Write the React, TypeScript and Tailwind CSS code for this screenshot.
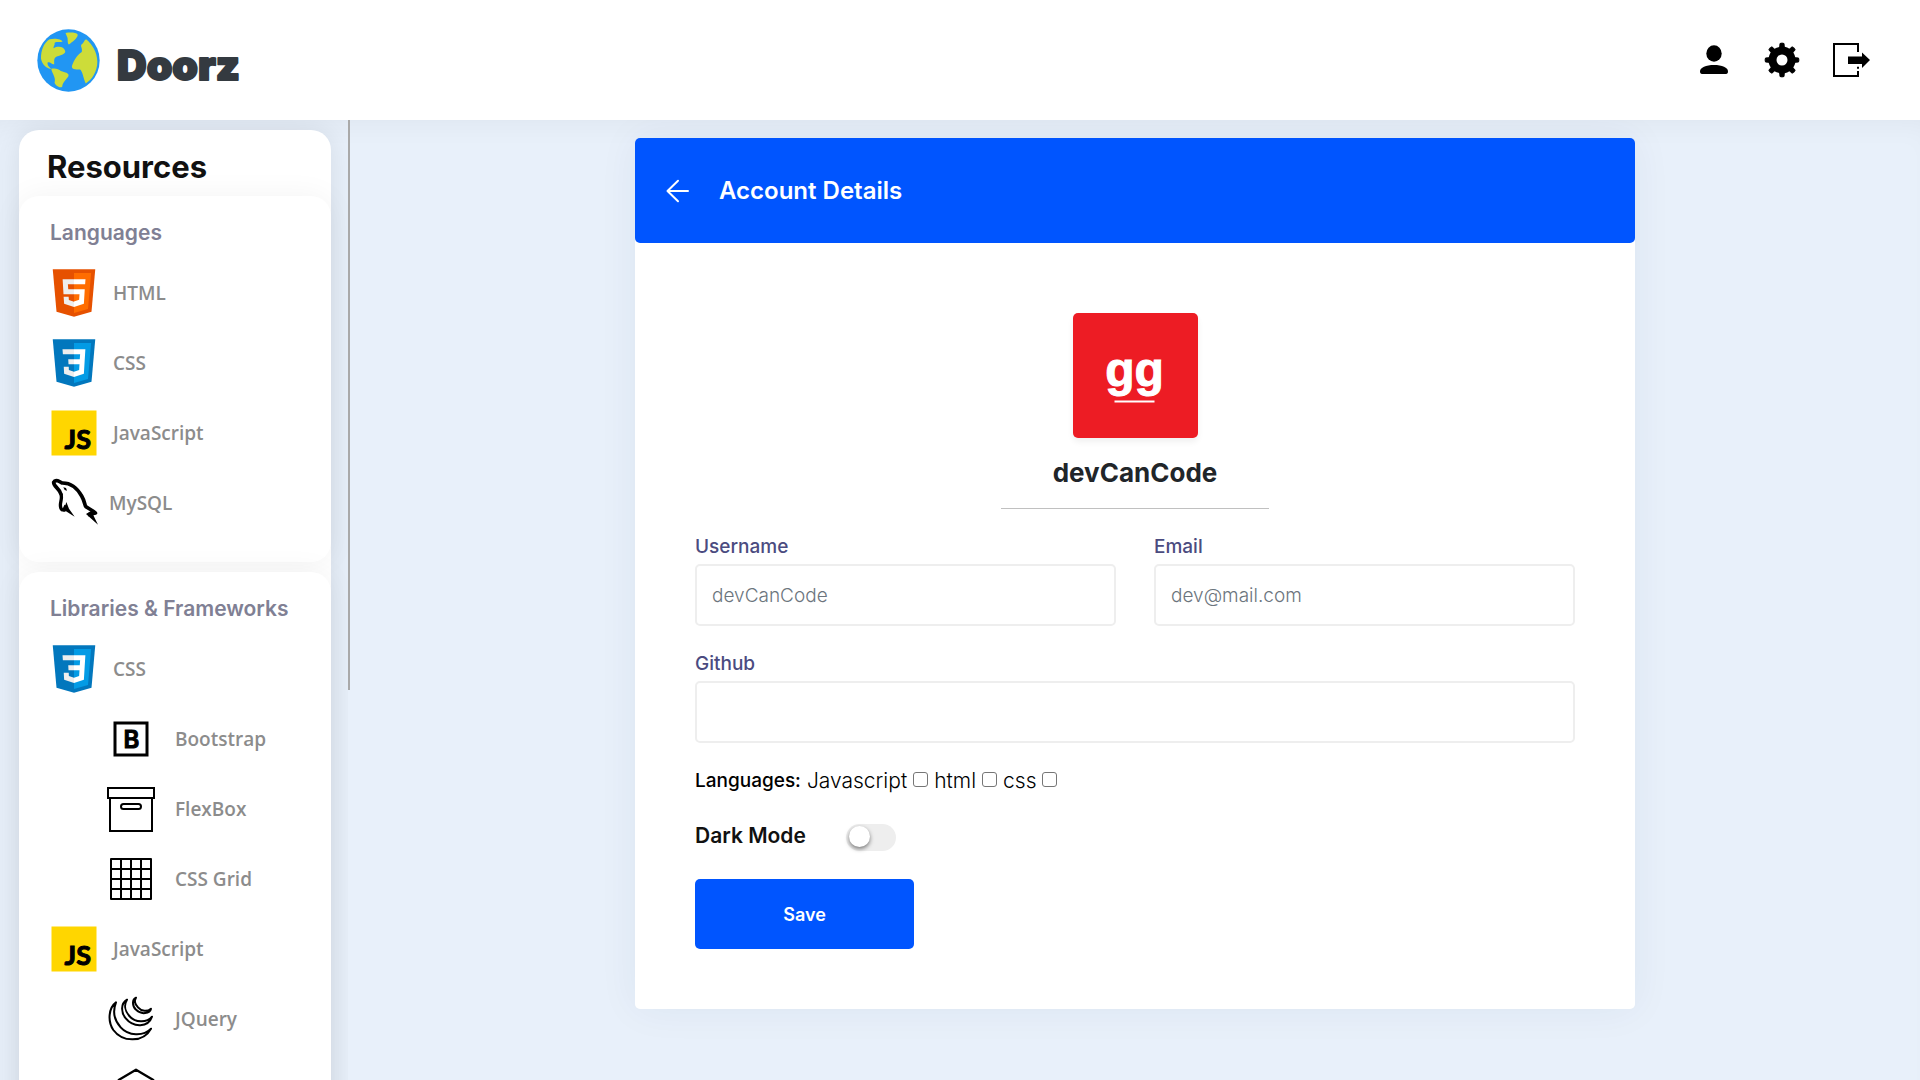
import type { ReactNode } from "react";

function Globe() {
  return (
    <svg viewBox="110 86 190 190" className="size-[63px]" aria-hidden="true">
      <circle cx="205" cy="181" r="94" fill="#2196F3" />
      <g fill="#CDDC39">
        <path d="M122 175C122 150 130 128 148 117C165 113 185 117 187 124C178 128 168 122 163 128C165 134 158 138 160 144C175 135 192 140 195 152C197 162 180 165 172 168C160 172 162 180 162 192C155 195 150 183 142 187C140 197 150 203 153 207C140 205 125 195 122 175z" />
        <path d="M153 206C165 203 175 206 182 213C195 218 207 218 205 228C200 238 188 245 186 260C178 266 165 255 163 248C168 232 155 220 153 206z" />
        <path d="M196 98C210 96 228 96 233 103C232 115 215 125 206 133C200 128 205 115 200 108z" />
        <path d="M258 117C275 130 292 155 292 185C292 215 275 240 257 250C250 235 248 215 240 208C225 208 212 208 216 195C222 180 230 165 245 155C248 145 240 138 244 133C250 130 252 120 258 117z" />
      </g>
    </svg>
  );
}

function Wordmark() {
  return (
    <svg viewBox="0 0 140 70" className="h-[70px] w-[140px]" role="img" aria-label="Doorz">
      <text
        x="1"
        y="55"
        fill="#343a40"
        stroke="#343a40"
        strokeWidth="2"
        strokeLinejoin="round"
        className="font-['Inter',sans-serif] text-[41px] font-black"
      >
        Doorz
      </text>
    </svg>
  );
}

function UserIcon() {
  return (
    <svg viewBox="0 0 50 50" className="size-[50px]" aria-hidden="true">
      <ellipse cx="25" cy="18.500" rx="7.700" ry="8.300" />
      <path d="M11 36.500C11 32.500 17 30 25 30S39 32.500 39 36.500C39 38 38.300 39 37 39H13C11.700 39 11 38 11 36.500z" />
    </svg>
  );
}

function GearIcon() {
  return (
    <svg viewBox="0 0 50 50" className="size-[50px]" aria-hidden="true">
      {[0, 45, 90, 135, 180, 225, 270, 315].map((a) => (
        <path key={a} d="M22.500 15L23 8.500Q25 7.700 27 8.500L27.500 15z" transform={`rotate(${a} 25 25)`} stroke="#000" strokeWidth="1" />
      ))}
      <circle cx="25" cy="25" r="9.500" fill="none" stroke="#000" strokeWidth="8" />
    </svg>
  );
}

function ExitIcon() {
  return (
    <svg viewBox="0 0 50 50" className="size-[50px]" aria-hidden="true">
      <path d="M33 17V9H9V41H33V36M33 33.800V31.800" fill="none" stroke="#000" strokeWidth="2" />
      <path d="M23 21.500H37V17.500L45 25L37 33V29H23z" />
    </svg>
  );
}

function ShieldLogo({ dark, light, right, left }: { dark: string; light: string; right: string; left: string }) {
  return (
    <svg viewBox="0 0 48 48" className="size-[60px]" aria-hidden="true">
      <path fill={dark} d="M41 5H7l3 34 14 4 14-4z" />
      <path fill={light} d="M24 8v31.900l11.200-3.200L37.700 8z" />
      <path fill="#fff" d={right} />
      <path fill="#eee" d={left} />
    </svg>
  );
}

function HtmlLogo() {
  return (
    <ShieldLogo
      dark="#E65100"
      light="#FF6D00"
      right="M24 25v-4h8.600l-.7 11.500L24 35.100v-4.200l4.100-1.400.3-4.500zM32.900 17l.3-4H24v4z"
      left="M24 30.900v4.200l-7.900-2.600L15.700 27h4l.2 2.500zM19.100 17H24v-4h-9.100l.7 12H24v-4h-4.600z"
    />
  );
}

function CssLogo() {
  return (
    <ShieldLogo
      dark="#0277BD"
      light="#039BE5"
      right="M33.100 13H24v4h4.900l-.3 4H24v4h4.400l-.3 4.500-4.100 1.400v4.200l7.900-2.600.7-11.500z"
      left="M24 13v4h-8.900l-.3-4zM19.400 21l.2 4H24v-4zM19.800 27h-4l.3 5.500 7.900 2.600v-4.200l-4.100-1.400z"
    />
  );
}

function JsLogo() {
  return (
    <svg viewBox="0 0 60 60" className="size-[60px]" aria-hidden="true">
      <path fill="#FFD600" d="M7.500 7.500h45v45h-45z" />
      <text x="47" y="46" textAnchor="end" stroke="#000" strokeWidth="1" className="font-['Lato',sans-serif] text-[27px] font-bold">
        JS
      </text>
    </svg>
  );
}

function MysqlLogo() {
  return (
    <svg viewBox="132 669 168 180" className="h-[60px] w-14" aria-hidden="true">
      <path
        d="M184 735C180 715 160 710 161 697C166 686 180 695 186 699C215 698 232 715 245 738C256 757 253 765 258 770C268 777 282 784 286 789L264 794"
        fill="none"
        stroke="#000"
        strokeWidth="11"
        strokeLinejoin="round"
      />
      <path d="M183 732C188 750 178 757 182 772Q184 782 192 779L198 766" fill="none" stroke="#000" strokeWidth="10" />
      <path d="M199 756L207 776L224 800L198 784L190 786z" />
      <path d="M258 792L294 824L280 796L293 790L272 784z" />
      <path d="M190 712L198 714L201 722L194 720z" />
    </svg>
  );
}

function BootstrapLogo() {
  return (
    <svg viewBox="0 0 50 50" className="size-[50px]" aria-hidden="true">
      <rect x="9" y="9" width="32" height="32" fill="none" stroke="#000" strokeWidth="3" />
      <text x="25.500" y="33.500" textAnchor="middle" stroke="#000" strokeWidth="1" className="font-['Inter',sans-serif] text-[24px] font-semibold">
        B
      </text>
    </svg>
  );
}

function BoxIcon() {
  return (
    <svg viewBox="0 0 50 50" className="size-[50px]" fill="none" stroke="#000" strokeWidth="2" aria-hidden="true">
      <path d="M2 4H48V14H2zM4 14V47H46V14" />
      <rect x="15" y="20" width="20" height="5" rx="2.500" />
    </svg>
  );
}

function GridIcon() {
  return (
    <svg viewBox="0 0 50 50" className="size-[50px]" fill="none" stroke="#000" strokeWidth="2" strokeLinejoin="round" aria-hidden="true">
      <path d="M5 5H45V45H5zM15 5V45M25 5V45M35 5V45M5 15H45M5 25H45M5 35H45" />
    </svg>
  );
}

function JqueryLogo() {
  return (
    <svg viewBox="318 584 150 150" className="size-[50px]" fill="none" stroke="#000" strokeWidth="6" strokeLinejoin="round" aria-hidden="true">
      <path d="M348 609C326 625 322 665 340 692C368 730 430 730 453 688C430 712 385 710 362 684C342 662 338 635 348 609z" />
      <path d="M381 601C362 612 362 640 378 658C400 685 445 685 456 652C440 672 405 670 388 650C374 634 372 615 381 601z" />
      <path d="M408 595C396 600 396 620 408 631C424 648 450 642 453 628C442 638 424 636 414 624C404 614 402 604 408 595z" />
    </svg>
  );
}

function NodeLogo() {
  return (
    <svg viewBox="318 792 150 150" className="size-[50px]" fill="none" stroke="#000" strokeWidth="7" strokeLinejoin="round" aria-hidden="true">
      <path d="M408 809L460 840V897L408 927L356 897V840z" />
    </svg>
  );
}

function Item({ icon, label, sub = false }: { icon: ReactNode; label: string; sub?: boolean }) {
  return (
    <li className={sub ? "pl-[87px]" : "pl-[25px]"}>
      <a
        href="#"
        className={
          sub
            ? "flex h-[70px] items-center gap-[19px] font-['Open_Sans',sans-serif] text-[19px] font-semibold text-[#8c8c8c]"
            : "flex h-[70px] items-center gap-[9px] font-['Open_Sans',sans-serif] text-[19px] font-semibold text-[#8c8c8c]"
        }
      >
        {icon}
        <span>{label}</span>
      </a>
    </li>
  );
}

function Group({ title, children }: { title: string; children: ReactNode }) {
  return (
    <section className="mb-[10px] rounded-[20px] bg-white pt-[22px] pb-6 shadow-[0_0_30px_rgba(0,0,0,0.05)]">
      <h3 className="pl-[31px] text-[21px] leading-[30px] font-semibold text-[#808094]">{title}</h3>
      <ul className="pt-[10px]">{children}</ul>
    </section>
  );
}

function Field({ id, label, placeholder, wide = false }: { id: string; label: string; placeholder?: string; wide?: boolean }) {
  return (
    <div className={wide ? "col-span-2" : ""}>
      <label htmlFor={id} className="block text-[19px] leading-6 font-medium text-[#4b4b80]">
        {label}
      </label>
      <input
        id={id}
        type="text"
        placeholder={placeholder}
        className="mt-[5px] block h-[62px] w-full rounded-[5px] border-2 border-[#eee] bg-white px-[15px] text-[19px] font-light text-black placeholder:text-[#6c757d]"
      />
    </div>
  );
}

function Check({ label }: { label: string }) {
  return (
    <label className="flex items-center gap-[6px] text-[21px] font-light">
      {label}
      <input type="checkbox" className="mb-[3px] size-[15px] appearance-none rounded-[3px] border border-[#767676] bg-white checked:bg-[#0055ff]" />
    </label>
  );
}

export default function App() {
  return (
    <div className="flex h-screen flex-col overflow-hidden bg-[#e8f0fa] font-['Inter',sans-serif]">
      <header className="z-10 flex h-[120px] shrink-0 items-center justify-between bg-white pr-[45px] pl-[37px]">
        <a href="#" className="flex items-center gap-4">
          <Globe />
          <Wordmark />
        </a>
        <nav className="flex items-center gap-[18px]">
          <button type="button" aria-label="Profile"><UserIcon /></button>
          <button type="button" aria-label="Settings"><GearIcon /></button>
          <button type="button" aria-label="Log out"><ExitIcon /></button>
        </nav>
      </header>

      <div className="flex min-h-0 flex-1 shadow-[inset_0_20px_30px_-18px_rgba(0,0,0,0.05)]">
        <aside className="flex w-[350px] shrink-0">
          <div className="min-w-0 flex-1 overflow-y-auto pt-[10px] pr-[17px] pl-[19px] [scrollbar-width:none]">
            <div className="rounded-[20px] bg-white shadow-[0_0_30px_rgba(0,0,0,0.09)]">
              <h2 className="pt-[14px] pb-[7px] pl-7 text-[31px] leading-[45px] font-bold text-[#111]">Resources</h2>
              <Group title="Languages">
                <Item icon={<HtmlLogo />} label="HTML" />
                <Item icon={<CssLogo />} label="CSS" />
                <Item icon={<JsLogo />} label="JavaScript" />
                <Item icon={<MysqlLogo />} label="MySQL" />
              </Group>
              <Group title="Libraries &amp; Frameworks">
                <Item icon={<CssLogo />} label="CSS" />
                <Item sub icon={<BootstrapLogo />} label="Bootstrap" />
                <Item sub icon={<BoxIcon />} label="FlexBox" />
                <Item sub icon={<GridIcon />} label="CSS Grid" />
                <Item icon={<JsLogo />} label="JavaScript" />
                <Item sub icon={<JqueryLogo />} label="JQuery" />
                <Item sub icon={<NodeLogo />} label="Node.js" />
              </Group>
            </div>
          </div>
          <div className="w-[2px]">
            <div className="h-[59.4%] bg-[#a9a9a9]" />
          </div>
        </aside>

        <main className="flex-1 overflow-hidden px-6 pt-[18px]">
          <div className="mx-auto max-w-[1000px] rounded-[5px] bg-white shadow-[0_0_40px_rgba(0,51,102,0.06)]">
            <div className="flex h-[105px] items-center gap-[29px] rounded-[5px] bg-[#0055ff] pl-[31px] text-white">
              <button type="button" aria-label="Back">
                <svg viewBox="0 0 24 24" className="size-6" fill="none" stroke="currentColor" strokeWidth="2" strokeLinecap="round" strokeLinejoin="round" aria-hidden="true">
                  <path d="M22 12H1.500M12 1.800L1.500 12L12 22.200" />
                </svg>
              </button>
              <h1 className="text-[24px] font-semibold">Account Details</h1>
            </div>

            <form className="px-[60px] pt-[70px] pb-[60px]">
              <div className="mx-auto flex w-[268px] flex-col items-center border-b border-[#c0c0c0] pb-[17px]">
                <svg viewBox="0 0 125 125" className="size-[125px] rounded-[5px] bg-[#ed1c24] shadow-[0_4px_6px_rgba(0,0,0,0.06)]" role="img" aria-label="Avatar">
                  <text x="61.500" y="73" textAnchor="middle" fill="#fff" stroke="#fff" strokeWidth="1" className="font-['Liberation_Sans',sans-serif] text-[48px] font-bold">
                    gg
                  </text>
                  <path d="M41.500 88.500H81.500" stroke="#fff" strokeWidth="2" />
                </svg>
                <p className="pt-[17px] pb-px text-[26px] leading-[35px] font-bold text-[#212529]">devCanCode</p>
              </div>

              <div className="grid grid-cols-2 gap-x-[38px] gap-y-[26px] pt-[26px]">
                <Field id="username" label="Username" placeholder="devCanCode" />
                <Field id="email" label="Email" placeholder="dev@mail.com" />
                <Field id="github" label="Github" wide />
              </div>

              <div role="group" aria-labelledby="languages-label" className="flex items-center gap-[6px] pt-[23px] leading-[30px]">
                <span id="languages-label" className="text-[19px] font-medium">Languages:</span>
                <Check label="Javascript" />
                <Check label="html" />
                <Check label="css" />
              </div>

              <label className="mt-[25px] flex h-[30px] items-center gap-10 text-[21px] font-semibold text-[#111]">
                Dark Mode
                <input
                  type="checkbox"
                  role="switch"
                  className="mt-[3px] flex h-[27px] w-[50px] appearance-none items-center rounded-full bg-[#eee] px-[3px] before:-mt-[3px] before:size-[21px] before:rounded-full before:bg-white before:shadow-[0_2px_4px_rgba(0,0,0,0.5)] checked:justify-end checked:bg-[#0055ff]"
                />
              </label>

              <button type="submit" className="mt-7 block h-[70px] w-[219px] rounded-[5px] bg-[#0055ff] text-[18px] font-semibold text-white">
                Save
              </button>
            </form>
          </div>
        </main>
      </div>
    </div>
  );
}
